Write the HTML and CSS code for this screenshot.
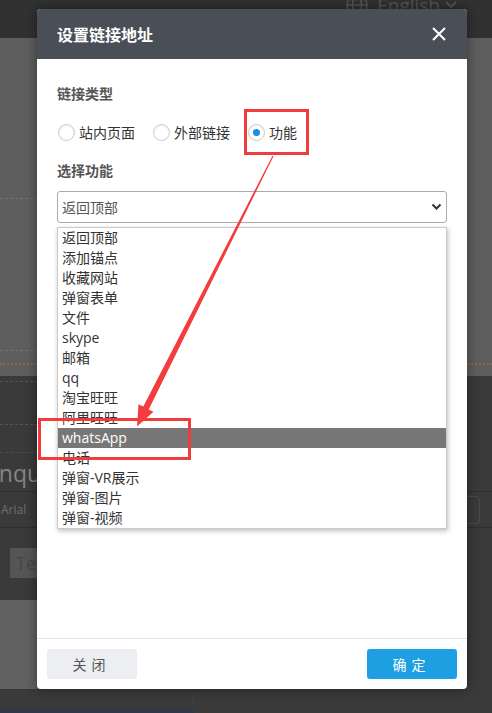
FILE: index.html
```html
<!DOCTYPE html>
<html lang="zh-CN">
<head>
  <meta charset="UTF-8">
  <title>设置链接地址</title>
  <link rel="stylesheet" href="styles.css">
</head>
<body>
  <div class="page">
    <div class="topbar">
      <div class="lang">
        <svg class="globe" width="22" height="22" viewBox="0 0 22 22"><g fill="none" stroke="#555" stroke-width="1.5"><circle cx="11" cy="11" r="10"/><ellipse cx="11" cy="11" rx="4.5" ry="10"/><path d="M1 11h20M3 5.5h16M3 16.5h16"/></g></svg>
        <span>English</span>
        <svg class="caret" width="12" height="8" viewBox="0 0 12 8"><path d="M1 1l5 5 5-5" fill="none" stroke="#555" stroke-width="1.8"/></svg>
      </div>
    </div>
    <div class="hero">
      <div class="dash dash-a"></div>
      <div class="dash dash-b"></div>
      <div class="dots"></div>
    </div>
    <div class="editor">
      <div class="dash dash-c"></div>
      <div class="dash dash-d"></div>
      <div class="dash dash-blue"></div>
      <div class="heading">Enquiry</div>
      <div class="toolbar">
        <span class="font-box">Arial</span>
        <span class="tool-box"></span>
      </div>
      <div class="input-box">Tel</div>
    </div>
    <div class="lower"><div class="panel"></div></div>
    <div class="strip">
      <div class="strip-col"></div>
    </div>
  </div>

  <div class="modal">
    <div class="modal-head">
      <span class="modal-title">设置链接地址</span>
      <svg width="14" height="14" viewBox="0 0 14 14"><path d="M1 1l12 12M13 1L1 13" stroke="#fff" stroke-width="2"/></svg>
    </div>
    <div class="modal-body">
      <div class="field-label">链接类型</div>
      <div class="radios">
        <label class="radio"><i></i>站内页面</label>
        <label class="radio"><i></i>外部链接</label>
        <label class="radio on"><i></i>功能</label>
      </div>
      <div class="field-label second">选择功能</div>
      <div class="select">
        <span>返回顶部</span>
        <svg width="11" height="8" viewBox="0 0 11 8"><path d="M1.5 1.5l4 4 4-4" fill="none" stroke="#333" stroke-width="2"/></svg>
      </div>
      <ul class="options">
        <li>返回顶部</li>
        <li>添加锚点</li>
        <li>收藏网站</li>
        <li>弹窗表单</li>
        <li>文件</li>
        <li>skype</li>
        <li>邮箱</li>
        <li>qq</li>
        <li>淘宝旺旺</li>
        <li>阿里旺旺</li>
        <li class="active">whatsApp</li>
        <li>电话</li>
        <li>弹窗-VR展示</li>
        <li>弹窗-图片</li>
        <li>弹窗-视频</li>
      </ul>
    </div>
    <div class="modal-foot">
      <button class="btn btn-close">关闭</button>
      <button class="btn btn-ok">确定</button>
    </div>
  </div>

  <div class="mark mark-radio"></div>
  <div class="mark mark-item"></div>
  <svg class="arrow" width="492" height="713" viewBox="0 0 492 713">
    <polygon fill="#f43c3c" points="272.5,155.8 273.5,156.2 148.7,409.4 153.5,411.8 137,426.5 138.5,404.2 143.3,406.6"/>
  </svg>
</body>
</html>
```

FILE: styles.css
```css
* { box-sizing: border-box; }
html, body { margin: 0; width: 492px; height: 713px; overflow: hidden; background: #3a3a3a; font-family: "Open Sans", "Noto Sans CJK SC", sans-serif; }
body { position: relative; }

/* dimmed page behind the dialog */
.page { display: flex; flex-direction: column; }
.topbar { height: 38px; background: #313131; display: flex; justify-content: flex-end; align-items: flex-start; overflow: hidden; }
.lang { display: flex; align-items: center; gap: 9px; margin: -6px 35px 0 0; color: #555; font-size: 19px; line-height: 22px; }
.lang .caret { margin-left: -4px; }
.hero { height: 338px; background: #5e5e5e; padding-top: 160px; }
.dash { height: 1px; border-top: 1px dashed #727272; width: 200px; }
.dash-b { margin-top: 151px; }
.dots { margin-top: 12px; border-top: 2px dotted #8a6a3c; }
.editor { height: 224px; background: #3a3a3a; padding: 5px 0 22px; }
.dash-c, .dash-d { border-top-color: #555; }
.dash-d { margin-top: 42px; }
.dash-blue { margin-top: 27px; border-top-color: #2d5468; }
.heading { margin: 2px 0 0 -14px; height: 36px; line-height: 36px; font-size: 23px; color: #858585; }
.toolbar { height: 37px; border-top: 1px solid #2e2e2e; border-bottom: 1px solid #2e2e2e; display: flex; justify-content: space-between; align-items: center; }
.font-box { font-size: 12px; color: #6f6f6f; padding-left: 1px; }
.tool-box { width: 20px; height: 28px; margin-right: 12px; border: 1px solid #4a4a4a; border-radius: 3px; }
.input-box { margin: 20px 0 0 10px; width: 150px; height: 30px; background: #555; color: #464646; font-size: 18px; line-height: 30px; padding-left: 6px; }
.lower { height: 89px; }
.panel { width: 200px; height: 89px; background: #616161; }
.strip { height: 24px; display: flex; flex-direction: column; justify-content: flex-end; }
.strip-col { width: 194px; height: 21px; border-right: 1px dashed #33495a; border-bottom: 4px solid #2f3944; }

/* dialog */
.modal { position: absolute; left: 37px; top: 9px; width: 430px; height: 680px; background: #fff; border-radius: 4px; box-shadow: 0 0 12px rgba(0,0,0,0.45); display: flex; flex-direction: column; overflow: hidden; }
.modal-head { height: 50px; background: #4a4f57; display: flex; align-items: center; justify-content: space-between; padding: 0 21px 0 20px; }
.modal-title { color: #fff; font-size: 16px; font-weight: bold; letter-spacing: 0; }
.modal-body { flex: 1; padding: 25px 20px 0; }
.field-label { font-size: 14px; line-height: 20px; font-weight: bold; color: #555; }
.field-label.second { margin-top: 19px; }
.radios { display: flex; margin-top: 18px; height: 20px; }
.radio { display: flex; align-items: center; font-size: 14px; color: #333; margin-right: 17px; }
.radio i { width: 17px; height: 17px; margin: 0 4px 0 1px; border: 1px solid #c9c9c9; border-radius: 50%; box-shadow: inset 0 1px 2px rgba(0,0,0,0.08); display: flex; align-items: center; justify-content: center; }
.radio.on i::after { content: ""; width: 7px; height: 7px; border-radius: 50%; background: #1b8de0; }
.select { margin-top: 10px; height: 32px; border: 1px solid #aaa; border-radius: 3px; display: flex; align-items: center; justify-content: space-between; padding: 0 4px 0 4px; font-size: 14px; color: #555; }
.options { list-style: none; margin: 4px 0 0; padding: 0; border: 1px solid #cacaca; box-shadow: 1px 2px 5px rgba(0,0,0,0.25); }
.options li { height: 20px; line-height: 20px; font-size: 14px; color: #333; padding-left: 4px; }
.options li.active { background: #777; color: #fff; }
.modal-foot { height: 51px; border-top: 1px solid #e5e5e5; padding: 10px; display: flex; justify-content: space-between; }
.btn { width: 90px; height: 30px; border: none; border-radius: 3px; font-family: inherit; font-size: 14px; letter-spacing: 5px; padding-left: 5px; }
.btn-close { background: #eceef2; color: #555; }
.btn-ok { background: #1e9fe1; color: #fff; }

/* annotation marks */
.mark { position: absolute; border: 3px solid #f03c3c; }
.mark-radio { left: 244px; top: 109px; width: 65px; height: 46px; }
.mark-item { left: 38px; top: 418px; width: 153px; height: 42px; }
.arrow { position: absolute; left: 0; top: 0; pointer-events: none; }
```
